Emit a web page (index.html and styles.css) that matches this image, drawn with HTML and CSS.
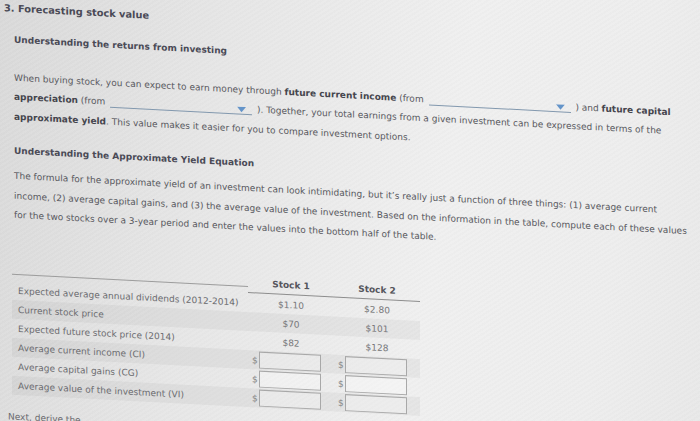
FILE: index.html
```html
<!DOCTYPE html>
<html lang="en">
<head>
<meta charset="utf-8">
<title>Forecasting stock value</title>
<link rel="stylesheet" href="styles.css">
</head>
<body>
<div class="page">
  <h1 class="h1">3. Forecasting stock value</h1>
  <h2 class="h2">Understanding the returns from investing</h2>
  <p class="para p1">When buying stock, you can expect to earn money through <b>future current income</b> (from <span class="dd"><svg class="tri" width="9" height="6" viewBox="0 0 9 6"><path d="M0 0H9L4.5 5.5Z"/></svg></span> ) and <b>future capital appreciation</b> (from <span class="dd"><svg class="tri" width="9" height="6" viewBox="0 0 9 6"><path d="M0 0H9L4.5 5.5Z"/></svg></span> ). Together, your total earnings from a given investment can be expressed in terms of the <b>approximate yield</b>. This value makes it easier for you to compare investment options.</p>
  <h2 class="h2 h3">Understanding the Approximate Yield Equation</h2>
  <p class="para p2">The formula for the approximate yield of an investment can look intimidating, but it’s really just a function of three things: (1) average current income, (2) average capital gains, and (3) the average value of the investment. Based on the information in the table, compute each of these values for the two stocks over a 3-year period and enter the values into the bottom half of the table.</p>

  <div class="tbl">
    <div class="thead">
      <div class="th-label"></div>
      <div class="th">Stock 1</div>
      <div class="th">Stock 2</div>
    </div>
    <div class="row">
      <div class="lbl">Expected average annual dividends (2012-2014)</div>
      <div class="val">$1.10</div>
      <div class="val">$2.80</div>
    </div>
    <div class="row">
      <div class="lbl">Current stock price</div>
      <div class="val">$70</div>
      <div class="val">$101</div>
    </div>
    <div class="row">
      <div class="lbl">Expected future stock price (2014)</div>
      <div class="val">$82</div>
      <div class="val">$128</div>
    </div>
    <div class="row">
      <div class="lbl">Average current income (CI)</div>
      <div class="inp"><span class="cur">$</span><span class="box"></span></div>
      <div class="inp"><span class="cur">$</span><span class="box"></span></div>
    </div>
    <div class="row">
      <div class="lbl">Average capital gains (CG)</div>
      <div class="inp"><span class="cur">$</span><span class="box"></span></div>
      <div class="inp"><span class="cur">$</span><span class="box"></span></div>
    </div>
    <div class="row">
      <div class="lbl">Average value of the investment (VI)</div>
      <div class="inp"><span class="cur">$</span><span class="box"></span></div>
      <div class="inp"><span class="cur">$</span><span class="box"></span></div>
    </div>
  </div>
  <p class="next">Next, derive the</p>
</div>
</body>
</html>
```

FILE: styles.css
```css
html, body {
  margin: 0;
  padding: 0;
  height: 421px;
  overflow: hidden;
}

body {
  background:
    repeating-linear-gradient(-32deg, rgba(0,0,0,0.012) 0 2px, rgba(255,255,255,0.02) 2px 4px),
    linear-gradient(100deg, #dadada 0%, #e7e7e7 30%, #f0f0f0 62%, #eeeeee 85%, #e9e9e9 100%);
}

.page {
  transform: skewY(3deg);
  transform-origin: 0 0;
  padding: 1px 0 0 14px;
  font-family: "DejaVu Sans", Verdana, sans-serif;
  font-size: 9px;
  color: #58585e;
}

.h1 {
  margin: 0 0 0 -10px;
  font-size: 9.8px;
  line-height: 14px;
  font-weight: bold;
  color: #4a4a56;
}

.h2 {
  margin: 17px 0 0 0;
  font-size: 9px;
  line-height: 14px;
  font-weight: bold;
  color: #4a4a56;
}

.h3 {
  margin-top: 16.5px;
}

.para {
  width: 678px;
  margin: 0;
  line-height: 19.5px;
}

.para b {
  color: #45454d;
}

.p1 {
  margin-top: 21.75px;
}

.p2 {
  margin-top: 9.5px;
}

.dd {
  display: inline-flex;
  justify-content: flex-end;
  align-items: flex-end;
  width: 142px;
  height: 10px;
  margin: 0 2px;
  border-bottom: 1px solid #8298ae;
  vertical-align: -1px;
}

.tri {
  display: block;
  margin: 0 6px 1px 0;
  fill: #6494c9;
}

.tbl {
  margin: 36.5px 0 0 -2px;
  width: 408px;
  color: #6c6c70;
}

.thead,
.row {
  display: grid;
  grid-template-columns: 236px 86px 86px;
}

.thead {
  height: 19px;
  align-items: start;
}

.th-label {
  height: 12px;
  border-bottom: 1px solid #9c9c9c;
}

.th {
  height: 18px;
  line-height: 18px;
  text-align: center;
  font-weight: bold;
  color: #55555c;
  border-bottom: 1px solid #8d8d8d;
}

.row {
  height: 19px;
  align-items: center;
}

.row:nth-child(odd) {
  background: rgba(0, 0, 0, 0.04);
}

.lbl {
  padding-left: 6px;
  white-space: nowrap;
}

.val {
  text-align: center;
  color: #77777a;
}

.inp {
  display: flex;
  align-items: center;
  gap: 1px;
  padding-left: 4px;
}

.cur {
  color: #8a8a8a;
}

.box {
  width: 60px;
  height: 15px;
  border: 1px solid #a8a8a8;
  background: rgba(255, 255, 255, 0.3);
}

.next {
  margin: 15px 0 0 -6px;
  line-height: 14px;
  color: #6a6a6e;
}
```
